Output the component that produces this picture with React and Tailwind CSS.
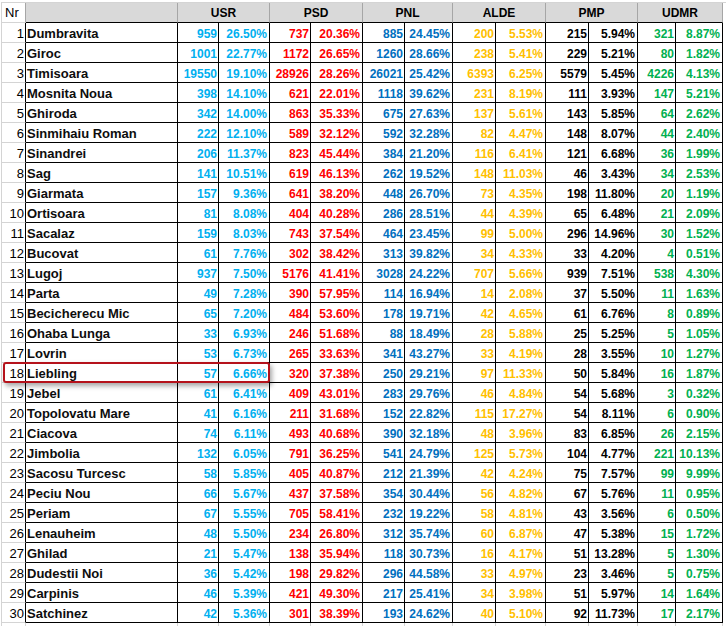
import React from "react";

const rows = [
  ["Dumbravita", 959, "26.50%", 737, "20.36%", 885, "24.45%", 200, "5.53%", 215, "5.94%", 321, "8.87%"],
  ["Giroc", 1001, "22.77%", 1172, "26.65%", 1260, "28.66%", 238, "5.41%", 229, "5.21%", 80, "1.82%"],
  ["Timisoara", 19550, "19.10%", 28926, "28.26%", 26021, "25.42%", 6393, "6.25%", 5579, "5.45%", 4226, "4.13%"],
  ["Mosnita Noua", 398, "14.10%", 621, "22.01%", 1118, "39.62%", 231, "8.19%", 111, "3.93%", 147, "5.21%"],
  ["Ghiroda", 342, "14.00%", 863, "35.33%", 675, "27.63%", 137, "5.61%", 143, "5.85%", 64, "2.62%"],
  ["Sinmihaiu Roman", 222, "12.10%", 589, "32.12%", 592, "32.28%", 82, "4.47%", 148, "8.07%", 44, "2.40%"],
  ["Sinandrei", 206, "11.37%", 823, "45.44%", 384, "21.20%", 116, "6.41%", 121, "6.68%", 36, "1.99%"],
  ["Sag", 141, "10.51%", 619, "46.13%", 262, "19.52%", 148, "11.03%", 46, "3.43%", 34, "2.53%"],
  ["Giarmata", 157, "9.36%", 641, "38.20%", 448, "26.70%", 73, "4.35%", 198, "11.80%", 20, "1.19%"],
  ["Ortisoara", 81, "8.08%", 404, "40.28%", 286, "28.51%", 44, "4.39%", 65, "6.48%", 21, "2.09%"],
  ["Sacalaz", 159, "8.03%", 743, "37.54%", 464, "23.45%", 99, "5.00%", 296, "14.96%", 30, "1.52%"],
  ["Bucovat", 61, "7.76%", 302, "38.42%", 313, "39.82%", 34, "4.33%", 33, "4.20%", 4, "0.51%"],
  ["Lugoj", 937, "7.50%", 5176, "41.41%", 3028, "24.22%", 707, "5.66%", 939, "7.51%", 538, "4.30%"],
  ["Parta", 49, "7.28%", 390, "57.95%", 114, "16.94%", 14, "2.08%", 37, "5.50%", 11, "1.63%"],
  ["Becicherecu Mic", 65, "7.20%", 484, "53.60%", 178, "19.71%", 42, "4.65%", 61, "6.76%", 8, "0.89%"],
  ["Ohaba Lunga", 33, "6.93%", 246, "51.68%", 88, "18.49%", 28, "5.88%", 25, "5.25%", 5, "1.05%"],
  ["Lovrin", 53, "6.73%", 265, "33.63%", 341, "43.27%", 33, "4.19%", 28, "3.55%", 10, "1.27%"],
  ["Liebling", 57, "6.66%", 320, "37.38%", 250, "29.21%", 97, "11.33%", 50, "5.84%", 16, "1.87%"],
  ["Jebel", 61, "6.41%", 409, "43.01%", 283, "29.76%", 46, "4.84%", 54, "5.68%", 3, "0.32%"],
  ["Topolovatu Mare", 41, "6.16%", 211, "31.68%", 152, "22.82%", 115, "17.27%", 54, "8.11%", 6, "0.90%"],
  ["Ciacova", 74, "6.11%", 493, "40.68%", 390, "32.18%", 48, "3.96%", 83, "6.85%", 26, "2.15%"],
  ["Jimbolia", 132, "6.05%", 791, "36.25%", 541, "24.79%", 125, "5.73%", 104, "4.77%", 221, "10.13%"],
  ["Sacosu Turcesc", 58, "5.85%", 405, "40.87%", 212, "21.39%", 42, "4.24%", 75, "7.57%", 99, "9.99%"],
  ["Peciu Nou", 66, "5.67%", 437, "37.58%", 354, "30.44%", 56, "4.82%", 67, "5.76%", 11, "0.95%"],
  ["Periam", 67, "5.55%", 705, "58.41%", 232, "19.22%", 58, "4.81%", 43, "3.56%", 6, "0.50%"],
  ["Lenauheim", 48, "5.50%", 234, "26.80%", 312, "35.74%", 60, "6.87%", 47, "5.38%", 15, "1.72%"],
  ["Ghilad", 21, "5.47%", 138, "35.94%", 118, "30.73%", 16, "4.17%", 51, "13.28%", 5, "1.30%"],
  ["Dudestii Noi", 36, "5.42%", 198, "29.82%", 296, "44.58%", 33, "4.97%", 23, "3.46%", 5, "0.75%"],
  ["Carpinis", 46, "5.39%", 421, "49.30%", 217, "25.41%", 34, "3.98%", 51, "5.97%", 14, "1.64%"],
  ["Satchinez", 42, "5.36%", 301, "38.39%", 193, "24.62%", 40, "5.10%", 92, "11.73%", 17, "2.17%"],
];

const parties = ["USR", "PSD", "PNL", "ALDE", "PMP", "UDMR"];
const colors = [
  "text-[#00b0f0]",
  "text-[#ff0000]",
  "text-[#0070c0]",
  "text-[#ffc000]",
  "text-black",
  "text-[#00b050]",
];
const numW = ["w-[41px]", "w-[41px]", "w-[42px]", "w-[43px]", "w-[43px]", "w-[38px]"];
const pctW = ["w-[51px]", "w-[52px]", "w-[48px]", "w-[50px]", "w-[49px]", "w-[47px]"];
const grpW = ["w-[92px]", "w-[93px]", "w-[90px]", "w-[93px]", "w-[92px]", "w-[85px]"];

export default function App() {
  return (
    <div className="relative w-[726px] h-[626px] overflow-hidden bg-white pt-[2px] pl-[1px] font-['Liberation_Sans',Arial,sans-serif]">
      {/* header */}
      <div className="flex h-[21px] border-t border-[#d4d4d4]">
        <div className="w-[25px] shrink-0 flex items-end pl-[3px] pb-[2px] leading-[14px] text-[13px] text-black border-l border-r border-b border-l-[#d4d4d4] border-r-[#a6a6a6] border-b-[#d4d4d4]">
          Nr
        </div>
        <div className="w-[152px] shrink-0 bg-[#d9d9d9] border-r border-b border-r-[#a6a6a6] border-b-black" />
        {parties.map((p, i) => (
          <div
            key={p}
            className={`${grpW[i]} shrink-0 bg-[#d9d9d9] flex items-end justify-center pb-[2px] leading-[14px] text-[12px] font-bold text-black border-r border-b border-r-[#a6a6a6] border-b-black`}
          >
            {p}
          </div>
        ))}
      </div>
      {/* data rows */}
      {rows.map((r, idx) => (
        <div key={idx} className="flex h-[20px]">
          <div className="w-[25px] shrink-0 flex items-end justify-end pr-[1px] pb-px leading-[14px] text-[13px] text-black border-l border-r border-b border-l-[#d4d4d4] border-r-black border-b-[#d4d4d4]">
            {idx + 1}
          </div>
          <div className="w-[152px] shrink-0 flex items-end pl-px pb-px leading-[14px] text-[13px] font-bold text-[#0d0d0d] border-r border-b border-black whitespace-nowrap">
            {r[0]}
          </div>
          {parties.map((p, i) => (
            <React.Fragment key={p}>
              <div
                className={`${numW[i]} ${colors[i]} shrink-0 flex items-end justify-end pr-px pb-px leading-[14px] text-[12px] font-bold border-r border-b border-black`}
              >
                {r[1 + i * 2]}
              </div>
              <div
                className={`${pctW[i]} ${colors[i]} shrink-0 flex items-end justify-end pr-[2px] pb-px leading-[14px] text-[12px] font-bold border-r border-b border-black`}
              >
                {r[2 + i * 2]}
              </div>
            </React.Fragment>
          ))}
        </div>
      ))}
      {/* trailing gridlines */}
      <div className="flex h-[6px]">
        <div className="w-[25px] shrink-0 border-l border-r border-l-[#d4d4d4] border-r-[#d4d4d4]" />
        <div className="w-[152px] shrink-0 border-r border-[#d4d4d4]" />
        {parties.map((p, i) => (
          <React.Fragment key={p}>
            <div className={`${numW[i]} shrink-0 border-r border-[#d4d4d4]`} />
            <div className={`${pctW[i]} shrink-0 border-r border-[#d4d4d4]`} />
          </React.Fragment>
        ))}
      </div>
      {/* highlight box */}
      <div className="absolute left-[3px] top-[362px] w-[267px] h-[21px] border-2 border-[#b5121b] rounded-[3px] shadow-[2px_3px_5px_rgba(0,0,0,0.35)] pointer-events-none" />
    </div>
  );
}
